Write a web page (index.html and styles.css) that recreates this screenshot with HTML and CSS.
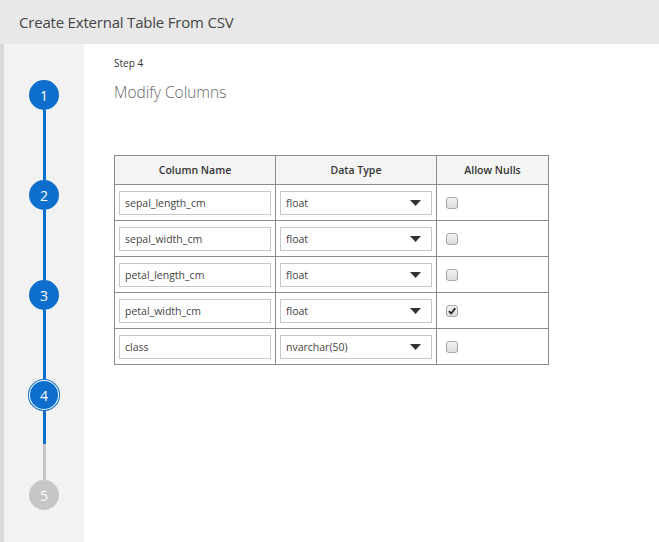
FILE: index.html
```html
<!DOCTYPE html>
<html>
<head>
<meta charset="utf-8">
<link rel="stylesheet" href="styles.css">
</head>
<body>
<div class="edge"></div>
<div class="dialog">
  <div class="titlebar">Create External Table From CSV</div>
  <div class="body">
    <div class="stepper">
      <div class="step done">1</div>
      <div class="line blue"></div>
      <div class="step done">2</div>
      <div class="line blue"></div>
      <div class="step done">3</div>
      <div class="line blue"></div>
      <div class="step current">4</div>
      <div class="line split"><span class="seg-blue"></span><span class="seg-gray"></span></div>
      <div class="step todo">5</div>
    </div>
    <div class="content">
      <div class="stepno">Step 4</div>
      <div class="steptitle">Modify Columns</div>
      <table class="cols">
        <thead>
          <tr><th class="c1">Column Name</th><th class="c2">Data Type</th><th class="c3">Allow Nulls</th></tr>
        </thead>
        <tbody>
          <tr>
            <td><div class="inp">sepal_length_cm</div></td>
            <td><div class="sel"><span>float</span><svg width="11" height="6" viewBox="0 0 11 6"><path d="M0 0H11L5.5 6Z" fill="#333"/></svg></div></td>
            <td><span class="cb"></span></td>
          </tr>
          <tr>
            <td><div class="inp">sepal_width_cm</div></td>
            <td><div class="sel"><span>float</span><svg width="11" height="6" viewBox="0 0 11 6"><path d="M0 0H11L5.5 6Z" fill="#333"/></svg></div></td>
            <td><span class="cb"></span></td>
          </tr>
          <tr>
            <td><div class="inp">petal_length_cm</div></td>
            <td><div class="sel"><span>float</span><svg width="11" height="6" viewBox="0 0 11 6"><path d="M0 0H11L5.5 6Z" fill="#333"/></svg></div></td>
            <td><span class="cb"></span></td>
          </tr>
          <tr>
            <td><div class="inp">petal_width_cm</div></td>
            <td><div class="sel"><span>float</span><svg width="11" height="6" viewBox="0 0 11 6"><path d="M0 0H11L5.5 6Z" fill="#333"/></svg></div></td>
            <td><span class="cb checked"><svg width="10" height="10" viewBox="0 0 10 10"><path d="M2 5.2L4.2 7.5L8.3 2.3" stroke="#222" stroke-width="1.8" fill="none"/></svg></span></td>
          </tr>
          <tr>
            <td><div class="inp">class</div></td>
            <td><div class="sel"><span>nvarchar(50)</span><svg width="11" height="6" viewBox="0 0 11 6"><path d="M0 0H11L5.5 6Z" fill="#333"/></svg></div></td>
            <td><span class="cb"></span></td>
          </tr>
        </tbody>
      </table>
    </div>
  </div>
</div>
</body>
</html>
```

FILE: styles.css
```css
* { box-sizing: border-box; }
html, body { margin: 0; padding: 0; }
body {
  width: 659px;
  height: 542px;
  overflow: hidden;
  display: flex;
  background: #dcdcdc;
  font-family: "Open Sans", "Noto Sans", sans-serif;
  color: #333;
}
.edge {
  width: 4px;
  flex: none;
  background: #dadada;
}
.dialog {
  flex: 1;
  display: flex;
  flex-direction: column;
  background: #fff;
}
.titlebar {
  height: 44px;
  flex: none;
  background: #e8e8e8;
  display: flex;
  align-items: center;
  font-size: 15px;
  letter-spacing: -0.2px;
  color: #444;
  margin-left: -4px;
  padding-left: 19px;
}
.body {
  flex: 1;
  display: flex;
}
.stepper {
  width: 80px;
  flex: none;
  background: #f2f2f2;
  display: flex;
  flex-direction: column;
  align-items: center;
  padding-top: 36px;
  padding-left: 1px;
  padding-right: 1px;
}
.step {
  width: 30px;
  height: 30px;
  border-radius: 50%;
  display: flex;
  align-items: center;
  justify-content: center;
  color: #fff;
  font-size: 14px;
  font-weight: 400;
  flex: none;
}
.step.done { background: #0e6ecd; }
.step.current {
  width: 32px;
  height: 32px;
  margin: -1px 0;
  background: #0e6ecd;
  box-shadow: inset 0 0 0 1px #0e6ecd, inset 0 0 0 2px #fff;
}
.step.todo { background: #c6c6c6; }
.line {
  width: 3px;
  height: 70px;
  flex: none;
}
.line.blue { background: #0e6ecd; }
.line.split { display: flex; flex-direction: column; }
.seg-blue { height: 34px; background: #0e6ecd; }
.seg-gray { height: 36px; background: #c6c6c6; }
.content {
  flex: 1;
  padding-left: 30px;
  padding-top: 12px;
}
.stepno {
  font-size: 10px;
  color: #333;
  line-height: 14px;
}
.steptitle {
  font-size: 15.5px;
  color: #666;
  margin-top: 11px;
  line-height: 22px;
  font-weight: 300;
}
.cols {
  margin-top: 52px;
  border-collapse: collapse;
  font-size: 10.5px;
}
.cols th, .cols td {
  border: 1px solid #8c8c8c;
  padding: 0;
}
.cols th {
  background: #f4f4f4;
  height: 29px;
  font-weight: 600;
  color: #333;
  text-align: center;
}
.c1, .c2 { width: 161px; }
.c3 { width: 112px; }
.cols td {
  height: 36px;
  padding: 0 4px;
  vertical-align: middle;
}
.inp, .sel {
  height: 24px;
  border: 1px solid #c8c8c8;
  background: #fff;
  display: flex;
  align-items: center;
  padding-left: 5px;
  color: #444;
  font-size: 10.5px;
}
.sel {
  justify-content: space-between;
  padding-right: 10px;
}
.cb {
  display: flex;
  align-items: center;
  justify-content: center;
  width: 12px;
  height: 12px;
  margin-left: 5px;
  border: 1px solid #a8a8a8;
  border-radius: 3px;
  background: linear-gradient(#f2f2f2, #dcdcdc);
}
```
